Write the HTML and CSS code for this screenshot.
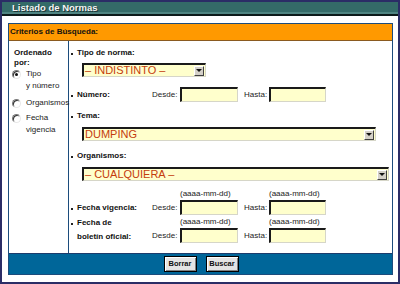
FILE: index.html
```html
<!DOCTYPE html>
<html lang="es">
<head>
<meta charset="utf-8">
<title>Listado de Normas</title>
<link rel="stylesheet" href="styles.css">
</head>
<body>
<div class="frame">
  <div class="title">Listado de Normas</div>
  <div class="content">
    <div class="panel">
      <div class="panel-head">Criterios de Búsqueda:</div>
      <div class="panel-body">
        <div class="side">
          <div class="side-title">Ordenado<br>por:</div>
          <div class="opt opt-first"><span class="radio checked"></span><span class="opt-text">Tipo<br>y número</span></div>
          <div class="opt opt-org"><span class="radio"></span><span class="opt-text">Organismos</span></div>
          <div class="opt opt-fecha"><span class="radio"></span><span class="opt-text">Fecha<br>vigencia</span></div>
        </div>
        <div class="main">
          <div class="label lbl-tipo"><span class="dot"></span>Tipo de norma:</div>
          <div class="select sel-tipo"><span class="sel-text">– INDISTINTO –</span><span class="arrow"></span></div>

          <div class="field-row row-num">
            <div class="label row-label"><span class="dot"></span>Número:</div>
            <span class="from">Desde:</span><span class="input"></span>
            <span class="to">Hasta:</span><span class="input input-2"></span>
          </div>

          <div class="label lbl-tema"><span class="dot"></span>Tema:</div>
          <div class="select sel-tema"><span class="sel-text">DUMPING</span><span class="arrow"></span></div>

          <div class="label lbl-org"><span class="dot"></span>Organismos:</div>
          <div class="select sel-org"><span class="sel-text">– CUALQUIERA –</span><span class="arrow"></span></div>

          <div class="date date-1">
            <span class="hint h-from">(aaaa-mm-dd)</span>
            <span class="hint h-to">(aaaa-mm-dd)</span>
            <div class="label d-label"><span class="dot"></span>Fecha vigencia:</div>
            <span class="from">Desde:</span><span class="input"></span>
            <span class="to">Hasta:</span><span class="input input-2"></span>
          </div>

          <div class="date date-2">
            <span class="hint h-from">(aaaa-mm-dd)</span>
            <span class="hint h-to">(aaaa-mm-dd)</span>
            <div class="label d-label d-label-2"><span class="dot"></span>Fecha de<br>boletín oficial:</div>
            <span class="from">Desde:</span><span class="input"></span>
            <span class="to">Hasta:</span><span class="input input-2"></span>
          </div>
        </div>
      </div>
      <div class="panel-foot">
        <span class="btn">Borrar</span>
        <span class="btn">Buscar</span>
      </div>
    </div>
  </div>
</div>
</body>
</html>
```

FILE: styles.css
```css
* { box-sizing: border-box; }
html, body { margin: 0; padding: 0; background: #fff; }
body { font-family: "Liberation Sans", Arial, sans-serif; font-size: 8px; color: #111; }

.frame {
  width: 400px;
  height: 284px;
  border: 2px solid #2b2d66;
  display: flex;
  flex-direction: column;
  background: #fff;
}

.title {
  height: 14px;
  padding-left: 10px;
  background: linear-gradient(#346b68 0, #346b68 10px, #4f8582 10px, #4f8582 12px);
  border-bottom: 2px solid #0c1a1a;
  color: #f4f4f4;
  font-weight: bold;
  font-size: 9.5px;
  line-height: 11px;
  text-shadow: 1px 1px 0 #1c3434;
}

.content { padding: 7px 5px 7px 6px; }

.panel {
  height: 252px;
  border: 1px solid #1c4c7c;
  display: flex;
  flex-direction: column;
}

.panel-head {
  height: 17px;
  background: #ff9900;
  border-bottom: 1px solid #8a5a20;
  font-weight: bold;
  line-height: 16px;
  padding-left: 1px;
  color: #111;
}

.panel-body {
  height: 212px;
  display: flex;
}

.side {
  width: 60px;
  border-right: 1px solid #1c4c7c;
  padding: 7px 0 0 5px;
}
.side-title { font-weight: bold; line-height: 10px; }

.opt { display: flex; align-items: flex-start; }
.opt-text { line-height: 12px; margin-left: 5px; color: #222; }
.opt-first { margin-top: 0; }
.opt-org { margin-top: 5px; }
.opt-fecha { margin-top: 3px; }

.radio {
  position: relative;
  flex: none;
  width: 9px;
  height: 9px;
  margin-top: 2px;
  margin-left: -2px;
  border-radius: 50%;
  border: 1px solid;
  border-color: #7a7a7a #e8e8e8 #e8e8e8 #7a7a7a;
  background: #fff;
  box-shadow: inset 1px 1px 0 #333;
}
.radio.checked::after {
  content: "";
  position: absolute;
  left: 2px;
  top: 2px;
  width: 3px;
  height: 3px;
  border-radius: 50%;
  background: #111;
}

.main {
  flex: 1;
  display: flex;
  flex-direction: column;
}

.label {
  font-weight: bold;
  line-height: 12px;
  display: flex;
  align-items: center;
}
.dot {
  flex: none;
  width: 2px;
  height: 2px;
  background: #222;
  margin: 2px 4px 0 2px;
}
.lbl-tipo { margin-top: 6px; }
.lbl-tema { margin-top: 8px; }
.lbl-org { margin-top: 9px; }

.select {
  display: flex;
  align-items: center;
  height: 14px;
  margin-left: 13px;
  background: #ffffcc;
  border-top: 2px solid #1a1a1a;
  border-left: 2px solid #1a1a1a;
  border-right: 1px solid #d6d6c8;
  border-bottom: 1px solid #d6d6c8;
  font-size: 11px;
  color: #c43c0c;
  padding-left: 1px;
}
.sel-text { flex: 1; line-height: 11px; }
.sel-tipo { width: 124px; margin-top: 4px; }
.sel-tema { width: 294px; margin-top: 5px; }
.sel-org { width: 307px; margin-top: 5px; }

.arrow {
  position: relative;
  flex: none;
  width: 10px;
  height: 10px;
  margin-right: 1px;
  background: #d4d0c8;
  border: 1px solid;
  border-color: #ffffff #404040 #404040 #ffffff;
}
.arrow::after {
  content: "";
  position: absolute;
  left: 1px;
  top: 2px;
  border-left: 3px solid transparent;
  border-right: 3px solid transparent;
  border-top: 3px solid #111;
}

.input {
  display: block;
  width: 58px;
  height: 15px;
  background: #ffffcc;
  border-top: 2px solid #1a1a1a;
  border-left: 2px solid #1a1a1a;
  border-right: 1px solid #d6d6c8;
  border-bottom: 1px solid #d6d6c8;
}
.input-2 { width: 57px; }

.field-row {
  display: grid;
  grid-template-columns: 83px 28px 58px 6px 25px 57px;
  align-items: center;
  margin-top: 10px;
}
.row-label { grid-column: 1; }
.from { color: #222; }
.to { grid-column: 5; color: #222; }

.date {
  display: grid;
  grid-template-columns: 83px 28px 58px 6px 25px 57px;
  grid-template-rows: 11px 15px;
  row-gap: 1px;
  align-items: center;
}
.date-1 { margin-top: 7px; }
.date-2 { margin-top: 1px; }
.hint { grid-row: 1; line-height: 11px; color: #222; }
.h-from { grid-column: 3; }
.h-to { grid-column: 6; }
.date .d-label { grid-row: 2; grid-column: 1; }
.date .from { grid-row: 2; grid-column: 2; }
.date .input { grid-row: 2; grid-column: 3; }
.date .to { grid-row: 2; grid-column: 5; }
.date .input-2 { grid-column: 6; }
.date-2 .d-label-2 {
  grid-row: 1 / 3;
  line-height: 14px;
  align-self: end;
  align-items: flex-start;
  margin-bottom: -1px;
}
.d-label-2 .dot { margin-top: 7px; }

.panel-foot {
  flex: 1;
  background: #006699;
  border-top: 1px solid #1c3c6c;
  display: flex;
  justify-content: center;
  align-items: center;
  gap: 9px;
  padding-left: 1px;
}
.btn {
  width: 33px;
  height: 16px;
  background: #e4e4e4;
  border: 1px solid #000;
  box-shadow: inset 1px 1px 0 #ffffff, inset -1px -1px 0 #808080;
  font-weight: bold;
  font-size: 7.5px;
  line-height: 14px;
  text-align: center;
  color: #111;
}
```
